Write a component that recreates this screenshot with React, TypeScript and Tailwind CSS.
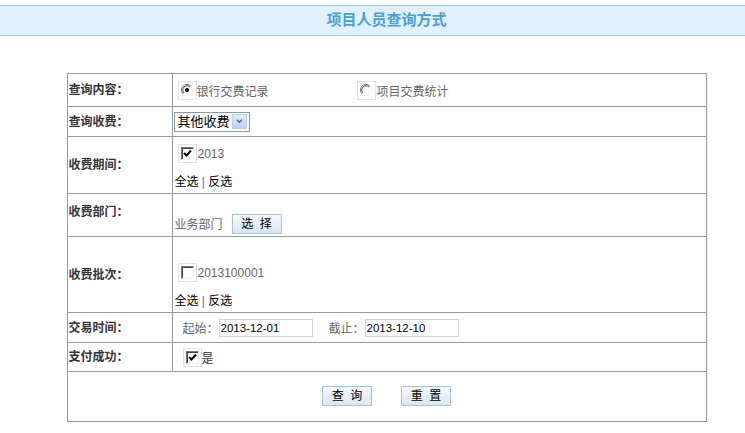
const cjk = { fontFamily: '"Liberation Sans", "Noto Sans CJK SC", sans-serif' };

function CheckBox({ checked }: { checked?: boolean }) {
  return (
    <span className="inline-flex h-[19px] w-[19px] shrink-0 items-center justify-center border border-[#e2e2e2] bg-white">
      <span className="relative inline-block h-[13px] w-[13px] border-l border-t border-b border-r border-l-[#7a7a7a] border-t-[#7a7a7a] border-b-[#f0f0f0] border-r-[#f0f0f0] bg-white shadow-[inset_1px_1px_0_#404040]">
        {checked && (
          <svg viewBox="0 0 11 11" className="absolute left-0 top-0 h-[11px] w-[11px]">
            <path d="M2 5 L4.5 7.5 L9 2.5" fill="none" stroke="#000" strokeWidth="2" />
          </svg>
        )}
      </span>
    </span>
  );
}

function Radio({ checked }: { checked?: boolean }) {
  return (
    <span className="inline-flex h-[19px] w-[19px] shrink-0 items-center justify-center border border-[#e2e2e2] bg-white">
      <svg viewBox="0 0 12 12" className="h-[12px] w-[12px]">
        <path d="M10 2 A5.5 5.5 0 0 0 2 10" fill="none" stroke="#808080" strokeWidth="1" />
        <path d="M9 3 A4.2 4.2 0 0 0 3 9" fill="none" stroke="#404040" strokeWidth="1" />
        <path d="M2 10 A5.5 5.5 0 0 0 10 2" fill="none" stroke="#f0f0f0" strokeWidth="1" />
        {checked && <circle cx="6" cy="6" r="2" fill="#000" />}
      </svg>
    </span>
  );
}

function Btn({ children }: { children: string }) {
  return (
    <span className="inline-flex h-[20px] w-[50px] items-center justify-center border border-[#a9c2df] bg-gradient-to-b from-[#f5f9fd] to-[#d9e7f5] text-[12px] leading-none text-black">
      {children}
    </span>
  );
}

function Pick() {
  return (
    <span className="text-[12px] text-black">
      全选 <span className="text-[#8e4f9a]">|</span> 反选
    </span>
  );
}

const label = "border border-[#999] pl-[1px] align-middle text-[12px] font-bold text-[#333]";
const cell = "border border-[#999] text-[12px] text-[#666]";

export default function App() {
  return (
    <div className="h-[433px] w-[745px] overflow-hidden bg-white" style={cjk}>
      <div className="w-[773px] pt-[5px]">
        <div className="flex h-[31px] items-center justify-center border-y border-[#9dcbf0] bg-[#e1f0fd]">
          <span className="text-[15px] font-bold text-[#4b9edc]">项目人员查询方式</span>
        </div>
        <table className="mx-auto mt-[37px] w-[640px] border-collapse border border-[#999]">
          <tbody>
            <tr className="h-[33px]">
              <td className={`${label} w-[105px]`}>查询内容：</td>
              <td className={`${cell} pl-[5px] align-middle`}>
                <div className="flex items-center">
                  <span className="flex w-[179px] items-center">
                    <Radio checked />
                    <span className="mt-[3px]">银行交费记录</span>
                  </span>
                  <Radio />
                  <span className="ml-[1px] mt-[3px]">项目交费统计</span>
                </div>
              </td>
            </tr>
            <tr className="h-[30px]">
              <td className={label}>查询收费：</td>
              <td className={`${cell} pl-[1px] align-middle`}>
                <div className="flex h-[20px] w-[76px] items-center justify-between whitespace-nowrap border border-[#7f9db9] bg-white pl-[3px] pr-[2px]">
                  <span className="text-[13px] leading-none text-black">其他收费</span>
                  <span className="flex h-[15px] w-[15px] items-center justify-center border border-[#bccff0] bg-gradient-to-b from-[#e3ecfc] to-[#bcd0f6]">
                    <svg viewBox="0 0 8 6" className="h-[5px] w-[7px]">
                      <path d="M1 1 L4 4 L7 1" fill="none" stroke="#4d6185" strokeWidth="1.6" />
                    </svg>
                  </span>
                </div>
              </td>
            </tr>
            <tr className="h-[57px]">
              <td className={label}>收费期间：</td>
              <td className={`${cell} pl-[2px] pt-[6px] align-top`}>
                <div className="flex items-center pl-[3px]">
                  <CheckBox checked />
                  <span className="ml-[1px] mt-[2px]">2013</span>
                </div>
                <div className="mt-[10px]">
                  <Pick />
                </div>
              </td>
            </tr>
            <tr className="h-[43px]">
              <td className={`${label} pb-[6px]`}>收费部门：</td>
              <td className={`${cell} pl-[2px] pt-[20px] align-top`}>
                <div className="flex items-center">
                  <span className="mt-[2px]">业务部门</span>
                  <span className="ml-[9px]">
                    <Btn>选&nbsp;&nbsp;择</Btn>
                  </span>
                </div>
              </td>
            </tr>
            <tr className="h-[76px]">
              <td className={label}>收费批次：</td>
              <td className={`${cell} pl-[2px] pt-[25px] align-top`}>
                <div className="flex items-center pl-[3px]">
                  <CheckBox />
                  <span className="ml-[1px] mt-[2px]">2013100001</span>
                </div>
                <div className="mt-[10px]">
                  <Pick />
                </div>
              </td>
            </tr>
            <tr className="h-[30px]">
              <td className={label}>交易时间：</td>
              <td className={`${cell} pl-[10px] align-middle`}>
                <div className="flex items-center">
                  <span className="mt-[3px]">起始：</span>
                  <input
                    readOnly
                    value="2013-12-01"
                    className="h-[18px] w-[94px] border border-[#d6d6d6] px-[1px] text-[11.5px] text-black outline-none"
                  />
                  <span className="ml-[16px] mt-[3px]">截止：</span>
                  <input
                    readOnly
                    value="2013-12-10"
                    className="h-[18px] w-[94px] border border-[#d6d6d6] px-[1px] text-[11.5px] text-black outline-none"
                  />
                </div>
              </td>
            </tr>
            <tr className="h-[29px]">
              <td className={label}>支付成功：</td>
              <td className={`${cell} pl-[10px] align-middle`}>
                <div className="flex items-center">
                  <CheckBox checked />
                  <span className="mt-[3px] text-[#333]">是</span>
                </div>
              </td>
            </tr>
            <tr className="h-[50px]">
              <td colSpan={2} className="border border-[#999] pb-[2px] align-middle">
                <div className="flex items-center justify-center gap-[29px]">
                  <Btn>查&nbsp;&nbsp;询</Btn>
                  <Btn>重&nbsp;&nbsp;置</Btn>
                </div>
              </td>
            </tr>
          </tbody>
        </table>
      </div>
    </div>
  );
}
